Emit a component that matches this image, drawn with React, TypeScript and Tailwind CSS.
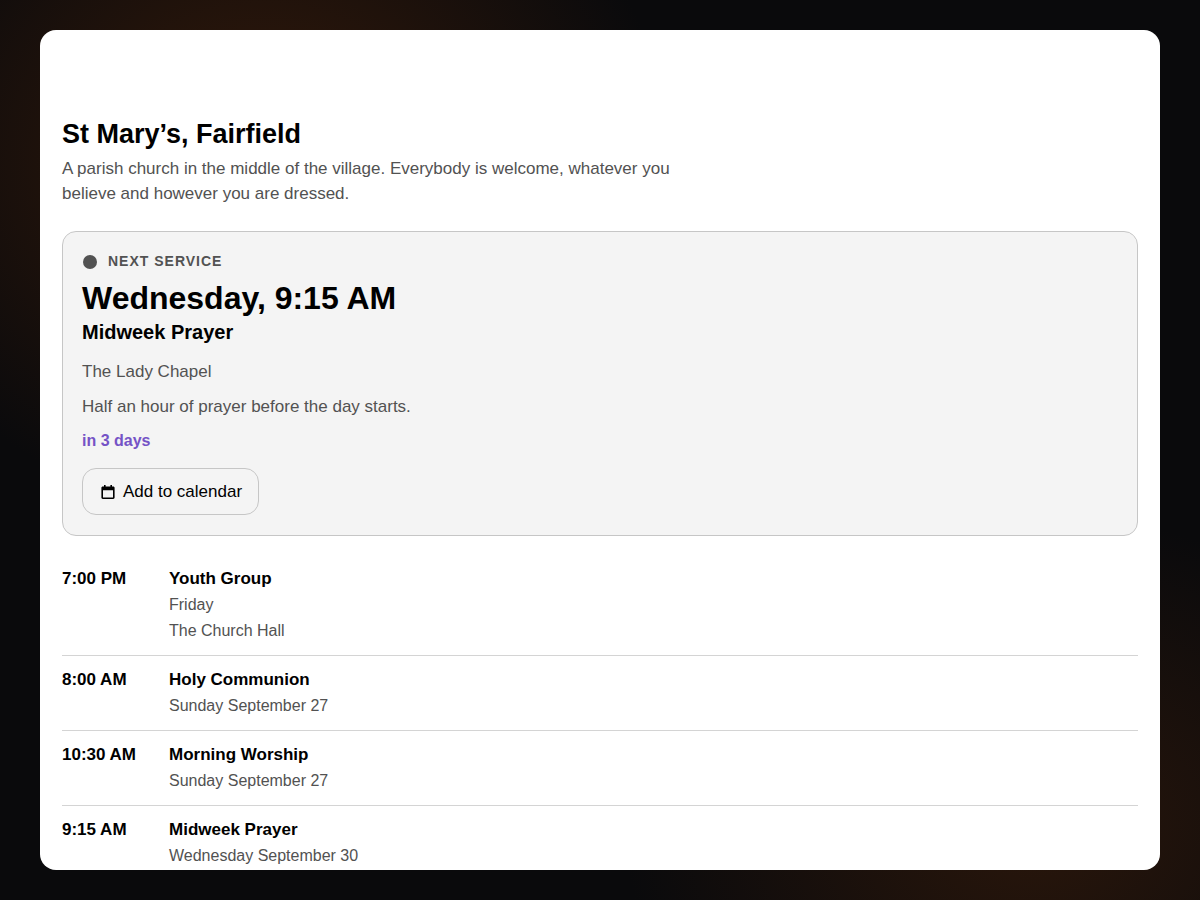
// =============================
// App.tsx
// Parish service times page
// =============================

type Service = {
  time: string;
  title: string;
  details: string[];
};

const services: Service[] = [
  { time: '7:00 PM', title: 'Youth Group', details: ['Friday', 'The Church Hall'] },
  { time: '8:00 AM', title: 'Holy Communion', details: ['Sunday September 27'] },
  { time: '10:30 AM', title: 'Morning Worship', details: ['Sunday September 27'] },
  { time: '9:15 AM', title: 'Midweek Prayer', details: ['Wednesday September 30'] },
];

function CalendarIcon() {
  return (
    <svg className="mt-px h-[14px] w-[14px]" viewBox="0 0 14 14" fill="currentColor" aria-hidden="true">
      <path
        fillRule="evenodd"
        d="M3 0h1.6v1.4h4.8V0H11v1.400h1.200c.8 0 1.400.6 1.400 1.400v9.800c0 .8-.6 1.400-1.400 1.400H1.800c-.8 0-1.400-.6-1.400-1.400V2.800c0-.8.6-1.400 1.400-1.400H3zM2 5.200v7.200h10V5.200z"
      />
    </svg>
  );
}

function NextService() {
  return (
    <section className="mt-[25px] rounded-[14px] border border-[#c6c6c6] bg-[#f4f4f4] px-[19px] pt-[19px] pb-5">
      <p className="flex items-center gap-[11px] text-[14px] leading-5 font-bold tracking-[1px] text-[#525252] uppercase">
        <span className="mt-[2px] ml-[1px] h-[14px] w-[14px] rounded-full bg-[#525252]" />
        Next service
      </p>
      <h2 className="mt-[7px] text-[32px] leading-10 font-bold">Wednesday, 9:15 AM</h2>
      <h3 className="text-[20px] leading-7 font-bold">Midweek Prayer</h3>
      <p className="mt-[13px] text-[17px] leading-[26px] text-[#525252]">The Lady Chapel</p>
      <p className="mt-[9px] text-[17px] leading-[26px] text-[#525252]">Half an hour of prayer before the day starts.</p>
      <p className="mt-2 text-[16px] leading-[26px] font-bold text-[#7553c6]">in 3 days</p>
      <button
        type="button"
        className="mt-[14px] flex h-[47px] items-center gap-2 rounded-[14px] border border-[#c6c6c6] pr-4 pl-[18px] text-[17px] leading-[26px]"
      >
        <CalendarIcon />
        Add to calendar
      </button>
    </section>
  );
}

export default function App() {
  return (
    <div className="h-screen bg-[#0a0a0c] bg-[radial-gradient(34%_40%_at_22%_18%,#351a0a,transparent),radial-gradient(34%_35%_at_86%_92%,#29160b,transparent)] px-10 py-[30px] font-['Liberation_Sans',Arial,sans-serif] text-black">
      <main className="h-full overflow-hidden rounded-2xl bg-white px-[22px] pt-[86px]">
        <h1 className="text-[27px] leading-9 font-bold">St Mary’s, Fairfield</h1>
        <p className="mt-1 max-w-[640px] text-[17px] leading-[25px] text-[#525252]">
          A parish church in the middle of the village. Everybody is welcome, whatever you believe and however you are
          dressed.
        </p>

        <NextService />

        {/* upcoming services */}
        <ul className="mt-[19px] divide-y divide-[#d4d4d4]">
          {services.map((service) => (
            <li key={service.time} className="flex gap-4 py-[11px]">
              <span className="w-[91px] text-[17px] leading-[26px] font-bold">{service.time}</span>
              <div className="flex-1">
                <h4 className="text-[17px] leading-[26px] font-bold">{service.title}</h4>
                {service.details.map((detail) => (
                  <p key={detail} className="text-[16px] leading-[26px] text-[#525252]">{detail}</p>
                ))}
              </div>
            </li>
          ))}
        </ul>
      </main>
    </div>
  );
}
